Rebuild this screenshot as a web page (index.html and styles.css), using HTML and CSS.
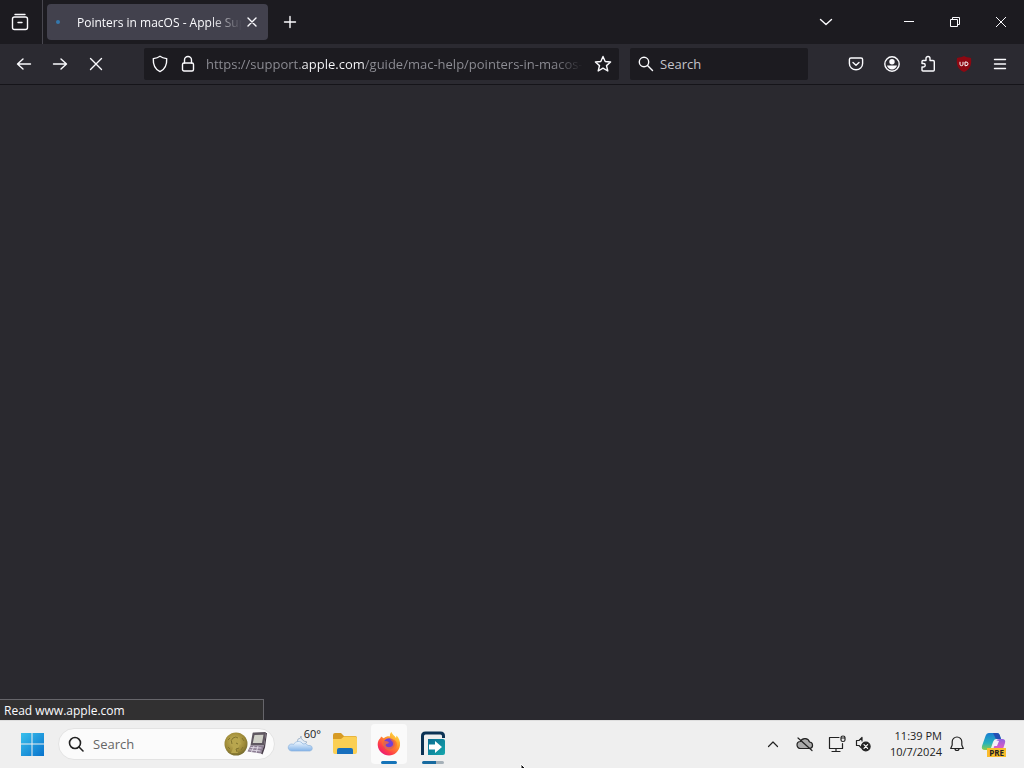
FILE: index.html
```html
<!DOCTYPE html>
<html lang="en">
<head>
<meta charset="utf-8">
<meta name="viewport" content="width=device-width, initial-scale=1">
<title>Pointers in macOS - Apple Support</title>
<link rel="stylesheet" href="styles.css">
</head>
<body>
<div class="desktop">
  <main class="browser">
    <header class="tabbar">
      <button class="view-btn" aria-label="View recent browsing">
        <svg width="20" height="20" viewBox="0 0 20 20" class="line"><path d="M5 2.500h10M2.500 8V7q0-2 2-2h11q2 0 2 2v8.500q0 2-2 2h-11q-2 0-2-2zM8 10.500h4"/></svg>
      </button>
      <div class="tab">
        <span class="loading-dot"></span>
        <span class="tab-title">Pointers in macOS - Apple Support</span>
        <button class="tab-close" aria-label="Close tab"><svg width="10" height="10" viewBox="0 0 10 10" class="line"><path d="M1 1l8 8M9 1l-8 8"/></svg></button>
      </div>
      <button class="new-tab" aria-label="New tab"><svg width="14" height="14" viewBox="0 0 14 14" class="line"><path d="M7 1.500v11M1.500 7h11"/></svg></button>
      <div class="window-controls">
        <button class="list-tabs" aria-label="List all tabs"><svg width="14" height="10" viewBox="0 0 14 10" class="line"><path d="M1.500 2.500l5.500 5 5.500-5"/></svg></button>
        <button aria-label="Minimize"><svg width="12" height="12" viewBox="0 0 12 12" class="thin"><path d="M1 5.500h10"/></svg></button>
        <button aria-label="Restore"><svg width="12" height="12" viewBox="0 0 12 12" class="thin"><path d="M1.500 3.500h7v7h-7zM3.500 3.500v-2h7v7h-2"/></svg></button>
        <button aria-label="Close"><svg width="12" height="12" viewBox="0 0 12 12" class="thin"><path d="M1 1l10 10M11 1L1 11"/></svg></button>
      </div>
    </header>
    <nav class="toolbar">
      <div class="tool-group">
        <button aria-label="Back"><svg width="16" height="16" viewBox="0 0 16 16" class="line"><path d="M14.500 8H1.800M7 3L1.500 8 7 13"/></svg></button>
        <button aria-label="Forward"><svg width="16" height="16" viewBox="0 0 16 16" class="line"><path d="M1.500 8h12.700M9 3l5.500 5L9 13"/></svg></button>
        <button aria-label="Stop"><svg width="16" height="16" viewBox="0 0 16 16" class="line"><path d="M2.500 2.500l11 11M13.500 2.500l-11 11"/></svg></button>
      </div>
      <div class="urlbar">
        <button aria-label="Tracking protection"><svg width="16" height="18" viewBox="0 0 16 18" class="line"><path d="M8 1.200C6 2.700 4 3.200 1.300 3.600C1 9.500 2.800 14.300 8 16.600C13.200 14.300 15 9.500 14.700 3.600C12 3.200 10 2.700 8 1.200z"/></svg></button>
        <button aria-label="Site information"><svg width="14" height="18" viewBox="0 0 14 18" class="line"><rect x="1.500" y="8" width="11" height="8" rx="1.500"/><path d="M3.500 8V5a3.500 3.500 0 0 1 7 0v3"/></svg></button>
        <input class="url-input" type="text" aria-label="Address" value="https://support.apple.com/guide/mac-help/pointers-in-macos-mchlp2920/mac">
        <button class="star" aria-label="Bookmark this page"><svg width="18" height="18" viewBox="0 0 18 18" class="line"><path d="M9 1.500l2.200 5 5.400.5-4.100 3.600 1.300 5.400L9 13.200 4.200 16l1.300-5.400L1.400 7l5.400-.5z"/></svg></button>
      </div>
      <label class="searchbar">
        <svg width="16" height="16" viewBox="0 0 16 16" class="line"><circle cx="6" cy="6" r="4.700"/><path d="M9.500 9.500l5 5"/></svg>
        <input type="text" placeholder="Search" aria-label="Search the web">
      </label>
      <div class="tool-group tool-end">
        <button aria-label="Save to Pocket"><svg width="16" height="16" viewBox="0 0 16 16" class="line"><path d="M3 2h10c1 0 1.600.6 1.600 1.600V7.500c0 3.800-3 6.300-6.600 6.300S1.400 11.300 1.400 7.500V3.600C1.400 2.600 2 2 3 2z"/><path d="M5 6.500L8 9.300l3-2.800"/></svg></button>
        <button aria-label="Account"><svg width="18" height="18" viewBox="0 0 18 18"><circle cx="9" cy="9" r="7.200" fill="none" stroke="#fbfbfe" stroke-width="1.400"/><circle cx="9" cy="6.700" r="2.700" fill="#fbfbfe"/><path d="M4 10.500h10c-.5 2.300-2.500 4-5 4s-4.500-1.700-5-4z" fill="#fbfbfe"/></svg></button>
        <button aria-label="Extensions"><svg width="16" height="18" viewBox="0 0 16 18" class="line"><path d="M2 8.500V6.500q0-1 1-1h3V3.500a2 2 0 0 1 4 0v2h3q1.300 0 1.300 1.300v8.200q0 1-1 1H3q-1 0-1-1v-3h1.500a1.700 1.700 0 0 0 0-3.500z"/></svg></button>
        <button aria-label="uBlock Origin"><svg width="18" height="18" viewBox="0 0 18 18"><path d="M9 1c2 1.200 4.500 1.200 7 2C17 10 15 14.500 9 17C3 14.500 1 10 2 3C4.500 2.200 7 2.200 9 1z" fill="#8d0812"/><path d="M5 6.800v2.400q0 1.500 1.500 1.500T8 9.200V6.800M10 7v3.700h1q2 0 2-1.900T11 7z" fill="none" stroke="#fff"/></svg></button>
        <button aria-label="Open application menu"><svg width="14" height="14" viewBox="0 0 14 14" class="line"><path d="M1.500 2.500h11M1.500 7h11M1.500 11.500h11"/></svg></button>
      </div>
    </nav>
    <section class="page" aria-label="Page content"></section>
    <div class="status" role="status">Read www.apple.com</div>
  </main>

  <footer class="taskbar">
    <button class="start" aria-label="Start">
      <svg width="24" height="24" viewBox="0 0 24 24"><defs><linearGradient id="win" x1="0" y1="0" x2="24" y2="24" gradientUnits="userSpaceOnUse"><stop offset="0" stop-color="#3cc4ee"/><stop offset="1" stop-color="#0872cc"/></linearGradient></defs><path d="M1 1h10.500v10.500H1zM12.500 1H24v10.500H12.500zM1 12.500h10.500V24H1zM12.500 12.500H24V24H12.500z" fill="url(#win)"/></svg>
    </button>
    <label class="task-search">
      <svg width="18" height="18" viewBox="0 0 18 18" fill="none" stroke="#222" stroke-width="1.600" stroke-linecap="round"><circle cx="8" cy="8" r="5.500"/><path d="M12 12l4 4"/></svg>
      <input type="text" placeholder="Search" aria-label="Search Windows">
      <svg width="46" height="26" viewBox="0 0 46 26">
        <defs><radialGradient id="coin" cx=".45" cy=".4" r=".65"><stop offset="0" stop-color="#cbbb62"/><stop offset=".65" stop-color="#9f8b38"/><stop offset="1" stop-color="#6d652d"/></radialGradient></defs>
        <circle cx="13" cy="13" r="11.500" fill="url(#coin)"/>
        <path d="M9 8q2-4 6-2 3 2 2 5l1 2-2 1v3l-3 1 2 4H8l2-5q-2-4-1-9z" fill="#b8a64e"/>
        <path d="M9 13q-2-4 1-6t5 0M13 12l2 1M16 17l-3 1 1 3M5 9l2-2M5 16l2 2M19 7l2 3M20 16l-2 3" fill="none" stroke="#81742f"/>
        <path d="M29.500 2.500q0-1 1-1l11.500-.5q1 0 1 1L41 14.500H27.500z" fill="#5f5861"/><path d="M31.500 4l9-.3L39 12H29.800z" fill="#d0d1c8"/>
        <path d="M27.500 14.500H41l-3 8-13.500-2z" fill="#8c7e93"/><path d="M27.500 16.500l11 .5M26.500 18.800l11 1.200M31 15l-2.500 6M35 15l-2 7" stroke="#ded7e3"/>
        <path d="M41 14.500l2-12.500h1L42 16.500l-2.500 7-1.500-1z" fill="#493e4b"/>
      </svg>
    </label>
    <button class="weather" aria-label="Weather 60 degrees">
      <svg width="28" height="20" viewBox="0 0 28 20"><defs><linearGradient id="cloud" x1="0" y1="0" x2="0" y2="1"><stop offset="0" stop-color="#f4faff"/><stop offset="1" stop-color="#82b3e9"/></linearGradient></defs><path d="M11 5q3 0 3-3 0 5 6 6l-3 3-7-2z" fill="#e5edf6" stroke="#9aaec4" stroke-width=".8"/><path d="M4.500 17a3.500 3.500 0 1 1 2-6.500A5.500 5.500 0 0 1 16 10a4 4 0 0 1 5 1.500h2a2.800 2.800 0 0 1 0 5.500z" fill="url(#cloud)" stroke="#8db3dc" stroke-width=".7"/></svg>
      <span class="degrees">60°</span>
    </button>
    <button class="task-app" aria-label="File Explorer">
      <svg width="26" height="24" viewBox="0 0 26 24"><path d="M1 3q0-2 2-2h6l3 3h11q2 0 2 2v5H1z" fill="#d79b25"/><path d="M1 7h8l3-2.500h11q2 0 2 2V20q0 2-2 2H3q-2 0-2-2z" fill="#fbcf54"/><path d="M5 22v-4q0-2 2-2h12q2 0 2 2v4z" fill="#176fbd"/></svg>
    </button>
    <button class="task-app active" aria-label="Firefox">
      <svg width="26" height="26" viewBox="0 0 26 26"><defs><linearGradient id="fox" x1="22" y1="2" x2="5" y2="23" gradientUnits="userSpaceOnUse"><stop offset="0" stop-color="#ffe646"/><stop offset=".4" stop-color="#ff962a"/><stop offset=".75" stop-color="#ff3e48"/><stop offset="1" stop-color="#e7157b"/></linearGradient></defs><path d="M5 5.500l2.800 1.700C10 5.500 12 5 14 5.400 13.700 3.500 14.400 2 15.500 1c.5 2.500 3 3.300 4.500 6l.5-2.500C23 7 24.500 10.500 24 14.500 23 20.500 18.500 24.500 13 24.500S2 20 1.700 14C1.500 10.800 2.800 8.500 4.500 7z" fill="url(#fox)"/><circle cx="13" cy="13" r="5.800" fill="#743fd5"/><path d="M7 10c2-.5 5 .3 6 1.700-1 1.300-3 .8-3.500 2.500 1 2.500 5.500 2.800 7.500-.2.500-2-.5-4-3-5.500 5-1 8 3 6.500 7-2.500 5-10 5.500-12.500.2C6 14.500 6 11.500 7 10z" fill="#ff7228" fill-opacity=".75"/></svg>
    </button>
    <button class="task-app running" aria-label="Remote session">
      <svg width="26" height="26" viewBox="0 0 26 26"><defs><linearGradient id="app" x1="0" y1="0" x2="1" y2="1"><stop offset="0" stop-color="#0a6b91"/><stop offset="1" stop-color="#16a8ad"/></linearGradient></defs><path d="M2.500 24V5q0-3 3-3h15q3 0 3 3v2" fill="none" stroke="#0b3254" stroke-width="3"/><path d="M8 8h15q2 0 2 2v12q0 2-2 2H8z" fill="url(#app)"/><path d="M9 13.500h6V10l7 6-7 6v-3.500H9z" fill="#fff"/></svg>
    </button>
    <div class="tray">
      <button class="tray-more" aria-label="Show hidden icons"><svg width="12" height="8" viewBox="0 0 12 8" class="dark"><path d="M1.500 6.500L6 2l4.500 4.500"/></svg></button>
      <button class="tray-cloud" aria-label="OneDrive"><svg width="18" height="16" viewBox="0 0 18 16" class="dark"><path d="M4.500 12.500a3.500 3.500 0 0 1 0-7A4.800 4.800 0 0 1 13.500 6a3.300 3.300 0 0 1 .5 6.500z" fill="#aaa"/><path d="M2 2l14 12.500"/></svg></button>
      <button class="tray-net" aria-label="Network"><svg width="18" height="18" viewBox="0 0 18 18" class="dark"><path d="M11 2.500H1.500v11h13V8.500M8 13.500v3M4 16.500h8M13 2.500q0-1.500 2-1.500t2 1.500V5q0 1.500-2 1.500T13 5zM13 3h4"/></svg></button>
      <button class="tray-sound" aria-label="Sound"><svg width="16" height="16" viewBox="0 0 16 16" class="dark"><path d="M7 1.500L4 4.500H1.500v5H4L6 11.500M7 1.500V5"/><circle cx="10.800" cy="10.500" r="4.300" fill="#222"/><path d="M9 8.700l3.600 3.600M12.600 8.700L9 12.300" stroke="#fff"/></svg></button>
      <button class="clock"><span>11:39 PM</span><span>10/7/2024</span></button>
      <button class="bell" aria-label="Notifications"><svg width="16" height="18" viewBox="0 0 16 18" class="dark"><path d="M8 2a4.800 4.800 0 0 0-4.800 4.800V10L1.700 13.500h12.600L12.800 10V6.800A4.800 4.800 0 0 0 8 2zM6 13.500a2 2 0 0 0 4 0"/></svg></button>
      <button class="copilot" aria-label="Copilot preview">
        <svg width="26" height="26" viewBox="0 0 26 26"><defs><linearGradient id="left" x1="0" y1="0" x2="0" y2="1"><stop offset="0" stop-color="#197dd2"/><stop offset=".6" stop-color="#27b2bd"/><stop offset="1" stop-color="#8fce45"/></linearGradient><linearGradient id="right" x1="0" y1="0" x2="0" y2="1"><stop offset="0" stop-color="#8d62df"/><stop offset=".5" stop-color="#d65bc8"/><stop offset="1" stop-color="#fa8e68"/></linearGradient></defs><path d="M8 2h8q2 0 2.700 2L20 8h-5q-2 0-3 3l-2 6q-1 2-3 2H4q-4 0-3-4L4.500 5Q5.500 2 8 2z" fill="url(#left)"/><path d="M12 2h4q2 0 2.700 2L20 8h-4q-2 0-2-2z" fill="#244fb4"/><path d="M19 8h2q4 0 3 4l-3 9q-1 3-4 3H9q-2 0-2-2l2-3q3 0 4-3l2-6q1-2 4-2z" fill="url(#right)"/><path d="M14 9l-2 6h4l2-5z" fill="#f7eef8"/></svg>
        <span class="pre">PRE</span>
      </button>
    </div>
  </footer>
  <svg class="pointer" width="12" height="18" viewBox="0 0 12 18" aria-hidden="true"><path d="M1 1v14l3.500-3 2.500 5 2-1-2.300-5H11z" fill="#111" stroke="#fff"/></svg>
</div>
</body>
</html>
```
FILE: styles.css
```css
* { box-sizing: border-box; }

body {
  margin: 0;
  font-family: "Open Sans", "Noto Sans", sans-serif;
  font-size: 12px;
}

button, input { font: inherit; color: inherit; }
button {
  display: flex;
  align-items: center;
  justify-content: center;
  flex: none;
  margin: 0;
  padding: 0;
  border: 0;
  background: none;
}
input {
  width: 100%;
  min-width: 0;
  flex: 1;
  padding: 0;
  border: 0;
  outline: 0;
  background: none;
}
svg { flex: none; }

.line, .thin, .dark {
  fill: none;
  stroke: #fbfbfe;
  stroke-width: 1.4;
  stroke-linecap: round;
  stroke-linejoin: round;
}
.thin { stroke-width: 1; stroke-linecap: butt; stroke-linejoin: miter; }
.dark { stroke: #222; stroke-width: 1.2; }

.desktop {
  position: relative;
  display: flex;
  flex-direction: column;
  height: 100vh;
  overflow: hidden;
}

.browser {
  position: relative;
  flex: 1;
  display: flex;
  flex-direction: column;
  min-height: 0;
  background: #2a292f;
  color: #fbfbfe;
}

.tabbar {
  display: flex;
  align-items: center;
  height: 44px;
  background: #1c1b20;
}
.view-btn {
  width: 43px;
  height: 44px;
  padding-right: 2px;
  border-right: 1px solid #48474f;
}
.tab {
  display: flex;
  align-items: center;
  flex: 0 1 221px;
  min-width: 0;
  height: 36px;
  margin-left: 4px;
  padding: 0 6px 0 9px;
  border-radius: 4px;
  background: #42414d;
}
.loading-dot {
  flex: none;
  width: 4px;
  height: 4px;
  margin-right: 17px;
  border-radius: 50%;
  background: #3478ad;
}
.tab-title {
  flex: 1;
  min-width: 0;
  overflow: hidden;
  white-space: nowrap;
  mask-image: linear-gradient(to left, transparent, #000 32px);
}
.tab-close { width: 20px; height: 24px; }
.new-tab { width: 44px; height: 36px; }
.window-controls { display: flex; margin-left: auto; }
.window-controls button { width: 46px; height: 44px; }
.window-controls .list-tabs { width: 36px; margin-right: 42px; }

.toolbar {
  display: flex;
  align-items: center;
  height: 41px;
  padding: 0 6px;
  border-bottom: 1px solid #151419;
  background: #2b2a31;
}
.tool-group { display: flex; }
.tool-group button { width: 36px; height: 32px; }
.urlbar, .searchbar {
  display: flex;
  align-items: center;
  min-width: 0;
  height: 32px;
  border-radius: 2px;
  background: #1c1b20;
  font-size: 13px;
}
.urlbar {
  flex: 1;
  margin-left: 30px;
  padding-left: 2px;
}
.urlbar button { width: 28px; height: 32px; }
.url-input {
  height: 32px;
  margin-left: 4px;
  background: linear-gradient(to right, #8f8f96 96px, #fbfbfe 96px, #fbfbfe 158px, #8f8f96 158px, #8f8f96 calc(100% - 30px), transparent);
  background-clip: text;
  -webkit-background-clip: text;
  -webkit-text-fill-color: transparent;
}
.urlbar .star { width: 32px; margin-left: 4px; }
.searchbar {
  flex: 0 1 178px;
  gap: 6px;
  margin-left: 11px;
  padding: 0 8px;
}
.searchbar input::placeholder { color: #c4c4ca; opacity: 1; }
.tool-end { margin-left: 30px; }

.page { flex: 1; }
.status {
  position: absolute;
  left: 0;
  bottom: 0;
  width: 264px;
  padding: 2px 4px 0;
  border: 1px solid #66656b;
  border-width: 1px 1px 0 0;
  background: #313031;
  line-height: 18px;
}

.taskbar {
  display: flex;
  align-items: center;
  height: 48px;
  padding: 0 10px 2px;
  border-top: 1px solid #dedede;
  background: #efefef;
  color: #222;
}
.start { width: 44px; height: 44px; }
.task-search {
  display: flex;
  align-items: center;
  flex: 0 1 217px;
  min-width: 0;
  height: 32px;
  margin-left: 4px;
  padding: 0 5px 0 8px;
  border: 1px solid #e3e3e3;
  border-radius: 16px;
  background: #fbfbfb;
  font-size: 13px;
}
.task-search input { margin-left: 8px; }
.task-search input::placeholder { color: #666; opacity: 1; }
.weather {
  position: relative;
  width: 44px;
  height: 44px;
  margin-left: 4px;
}
.degrees {
  position: absolute;
  top: 5px;
  right: 2px;
  font-size: 11px;
  line-height: 14px;
}
.task-app {
  position: relative;
  width: 36px;
  height: 40px;
  margin-left: 8px;
  border-radius: 4px;
}
.weather + .task-app { margin-left: 4px; }
.active { background: #fafafa; }
.active::after, .running::after {
  content: "";
  position: absolute;
  left: 10px;
  bottom: 0;
  width: 16px;
  height: 3px;
  border-radius: 2px;
  background: #1473b8;
}
.running::after { left: 7px; width: 22px; background: linear-gradient(to right, #176a9f 14px, #a5b0b8 14px); }

.tray { display: flex; align-items: center; margin-left: auto; }
.tray button { height: 40px; }
.tray .tray-more { width: 30px; }
.tray .tray-cloud { width: 34px; }
.tray .tray-net { width: 30px; }
.tray .tray-sound { width: 22px; }
.tray .clock {
  flex-direction: column;
  align-items: flex-end;
  width: 68px;
  font-size: 11px;
  line-height: 16px;
}
.tray .bell { width: 30px; }
.tray .copilot { position: relative; width: 40px; margin-left: 2px; }
.pre {
  position: absolute;
  right: 8px;
  bottom: 7px;
  padding: 0 2px;
  background: #f9bd2d;
  font-size: 8px;
  font-weight: 700;
  line-height: 9px;
}
.pointer { position: absolute; left: 50.8%; top: calc(100% - 5px); }
```
